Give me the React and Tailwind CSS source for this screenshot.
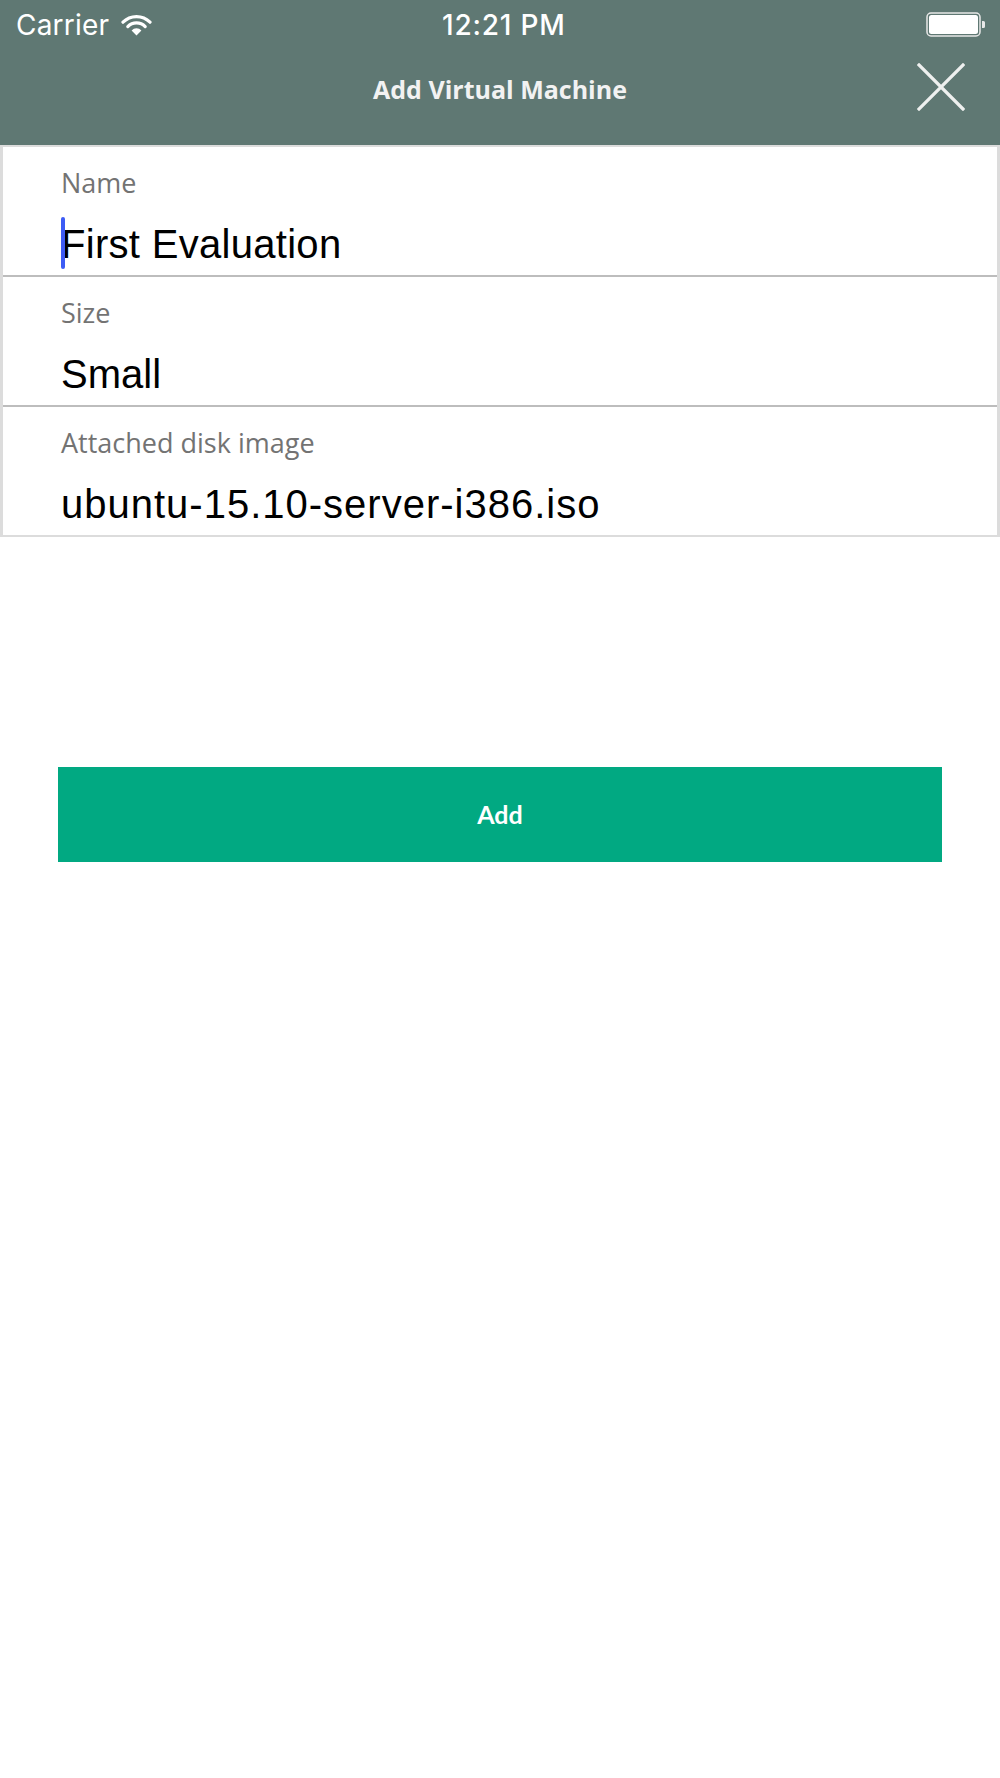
import React from 'react';

function WifiIcon() {
      return (
            <svg width="31" height="22" viewBox="0 0 31 22" fill="none">
                  <path d="M2 8.2 A19 19 0 0 1 29 8.2" stroke="white" strokeWidth="3.2" strokeLinecap="round" />
                  <path d="M6.8 12.6 A12.2 12.2 0 0 1 24.2 12.6" stroke="white" strokeWidth="3.2" strokeLinecap="round" />
                  <path d="M15.5 21.5 L10.6 16.4 A6.9 6.9 0 0 1 20.4 16.4 Z" fill="white" />
            </svg>
      );
}

function BatteryIcon() {
      return (
            <svg width="60" height="26" viewBox="0 0 60 26" fill="none">
                  <rect x="1" y="1" width="53" height="23" rx="4" stroke="#e8e8e8" strokeWidth="1.5" />
                  <rect x="3" y="3" width="49" height="19" rx="2.5" fill="white" />
                  <path d="M56 9 h1.5 a1.5 1.5 0 0 1 1.5 1.5 v4 a1.5 1.5 0 0 1 -1.5 1.5 h-1.5 z" fill="#e8e8e8" />
            </svg>
      );
}

function CloseIcon() {
      return (
            <svg width="48" height="48" viewBox="0 0 48 48" fill="none">
                  <path d="M2 2 L46 46 M46 2 L2 46" stroke="#eef0ef" strokeWidth="3.2" strokeLinecap="square" />
            </svg>
      );
}

function Field({ label, value, caret = false, last = false, tracking = '' }) {
      return (
            <div className={`pl-[58px] pt-[20px] ${last ? 'h-[128px]' : 'h-[130px] border-b-2 border-[#bdbdbd]'}`}>
                  <div className="text-[27px] leading-[32px] text-[#737373]" style={{ fontFamily: '"Open Sans", sans-serif' }}>{label}</div>
                  <div className={`relative mt-[21px] text-[40px] leading-[48px] text-black ${tracking}`} style={{ fontFamily: '"Liberation Sans", Arial, sans-serif' }}>
                        {caret && <span className="absolute left-0 top-[-3px] w-[4px] h-[52px] rounded-full bg-[#3d5cf5]" />}
                        {value}
                  </div>
            </div>
      );
}

export default function App() {
      return (
            <div className="w-[1000px] min-h-[1778px] bg-white">
                  <div className="bg-[#5f7873] h-[145px]">
                        <div className="relative h-[50px] flex items-center justify-between pl-[16px] pr-[14px] text-white" style={{ fontFamily: 'Inter, "Liberation Sans", sans-serif' }}>
                              <div className="flex items-center gap-[12px]">
                                    <span className="text-[28px] leading-[34px] tracking-[0.2px]">Carrier</span>
                                    <WifiIcon />
                              </div>
                              <span className="absolute left-[442px] top-[8px] text-[28px] leading-[34px] font-medium tracking-[0.8px]">12:21 PM</span>
                              <BatteryIcon />
                        </div>
                        <div className="relative h-[80px] flex items-center justify-center">
                              <span className="text-[25px] font-bold text-[#f2f2f2]" style={{ fontFamily: '"Open Sans", sans-serif' }}>Add Virtual Machine</span>
                              <button type="button" className="absolute right-[35px] top-[13px]">
                                    <CloseIcon />
                              </button>
                        </div>
                  </div>

                  <div className="border-x-[3px] border-t-2 border-b-2 border-[#dcdcdc]">
                        <Field label="Name" value="First Evaluation" caret tracking="tracking-[0.3px]" />
                        <Field label="Size" value="Small" />
                        <Field label="Attached disk image" value="ubuntu-15.10-server-i386.iso" last tracking="tracking-[1px]" />
                  </div>

                  <div className="px-[58px] mt-[230px]">
                        <button type="button" className="w-full h-[95px] bg-[#01a982] text-white text-[25px] font-bold" style={{ fontFamily: 'Lato, "Open Sans", sans-serif' }}>
                              Add
                        </button>
                  </div>
            </div>
      );
}
